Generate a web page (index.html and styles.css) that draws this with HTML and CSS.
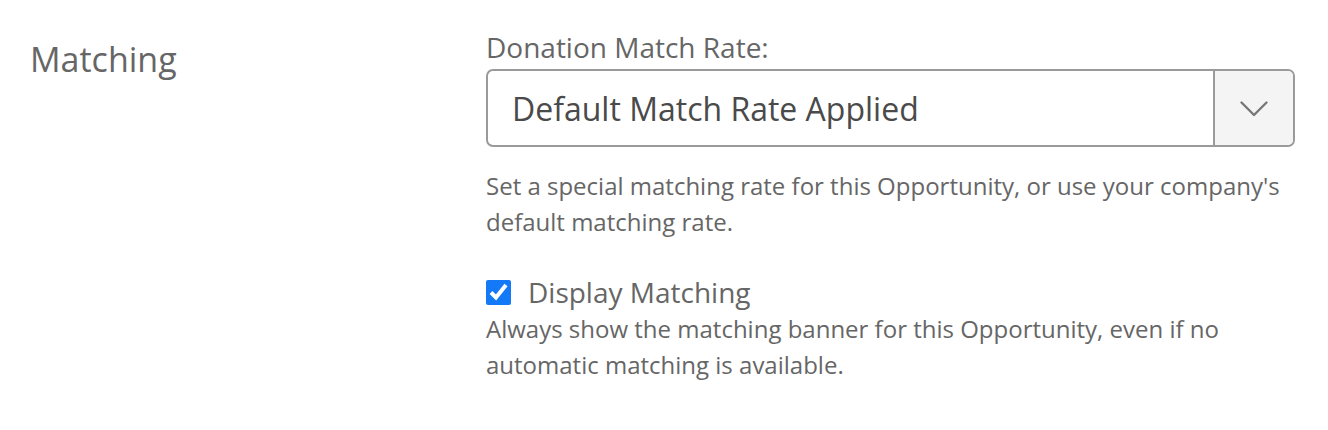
FILE: index.html
```html
<!DOCTYPE html>
<html lang="en">
<head>
<meta charset="utf-8">
<title>Matching</title>
<link rel="stylesheet" href="styles.css">
</head>
<body>
<div class="section">
  <h2 class="section-title">Matching</h2>
  <div class="fields">
    <label class="field-label" for="rate">Donation Match Rate:</label>
    <div class="select">
      <div class="select-value" id="rate">Default Match Rate Applied</div>
      <div class="select-arrow">
        <svg width="30" height="18" viewBox="0 0 30 18"><path d="M2.5 2.5 L15 15 L27.5 2.5" fill="none" stroke="#777" stroke-width="2.4" stroke-linecap="round" stroke-linejoin="round"/></svg>
      </div>
    </div>
    <p class="help">Set a special matching rate for this Opportunity, or use your company's default matching rate.</p>
    <label class="check">
      <input type="checkbox" checked>
      <span class="check-text">Display Matching</span>
    </label>
    <p class="help help-tight">Always show the matching banner for this Opportunity, even if no automatic matching is available.</p>
  </div>
</div>
</body>
</html>
```
FILE: styles.css
```css
html, body {
  margin: 0;
  padding: 0;
  background: #fff;
}
body {
  font-family: "Open Sans", "Liberation Sans", sans-serif;
  color: #666;
}
.section {
  display: grid;
  grid-template-columns: 456px 809px;
  padding: 30px 0 0 30px;
}
.section-title {
  margin: 0;
  font-weight: 400;
  font-size: 34px;
  line-height: 58px;
  color: #666;
}
.fields {
  display: flex;
  flex-direction: column;
}
.field-label {
  font-size: 28px;
  line-height: 34px;
  color: #666;
}
.select {
  display: flex;
  height: 78px;
  box-sizing: border-box;
  border: 2px solid #9a9a9a;
  border-radius: 7px;
  margin-top: 5px;
  overflow: hidden;
}
.select-value {
  flex: 1;
  display: flex;
  align-items: center;
  padding-left: 24px;
  font-size: 32px;
  color: #4a4a4a;
}
.select-arrow {
  width: 80px;
  border-left: 2px solid #9a9a9a;
  background: #f4f4f4;
  display: flex;
  align-items: center;
  justify-content: center;
  padding-top: 2px;
  box-sizing: border-box;
}
.help {
  margin: 21px 0 0;
  font-size: 24px;
  line-height: 36px;
  color: #666;
}
.check {
  display: flex;
  align-items: flex-start;
  margin-top: 34px;
  gap: 17px;
}
.check input {
  width: 25px;
  height: 25px;
  margin: 6px 0 0;
  accent-color: #1379f6;
}
.check-text {
  font-size: 28px;
  line-height: 36px;
  color: #666;
}
.help-tight {
  margin-top: 1px;
}
```
